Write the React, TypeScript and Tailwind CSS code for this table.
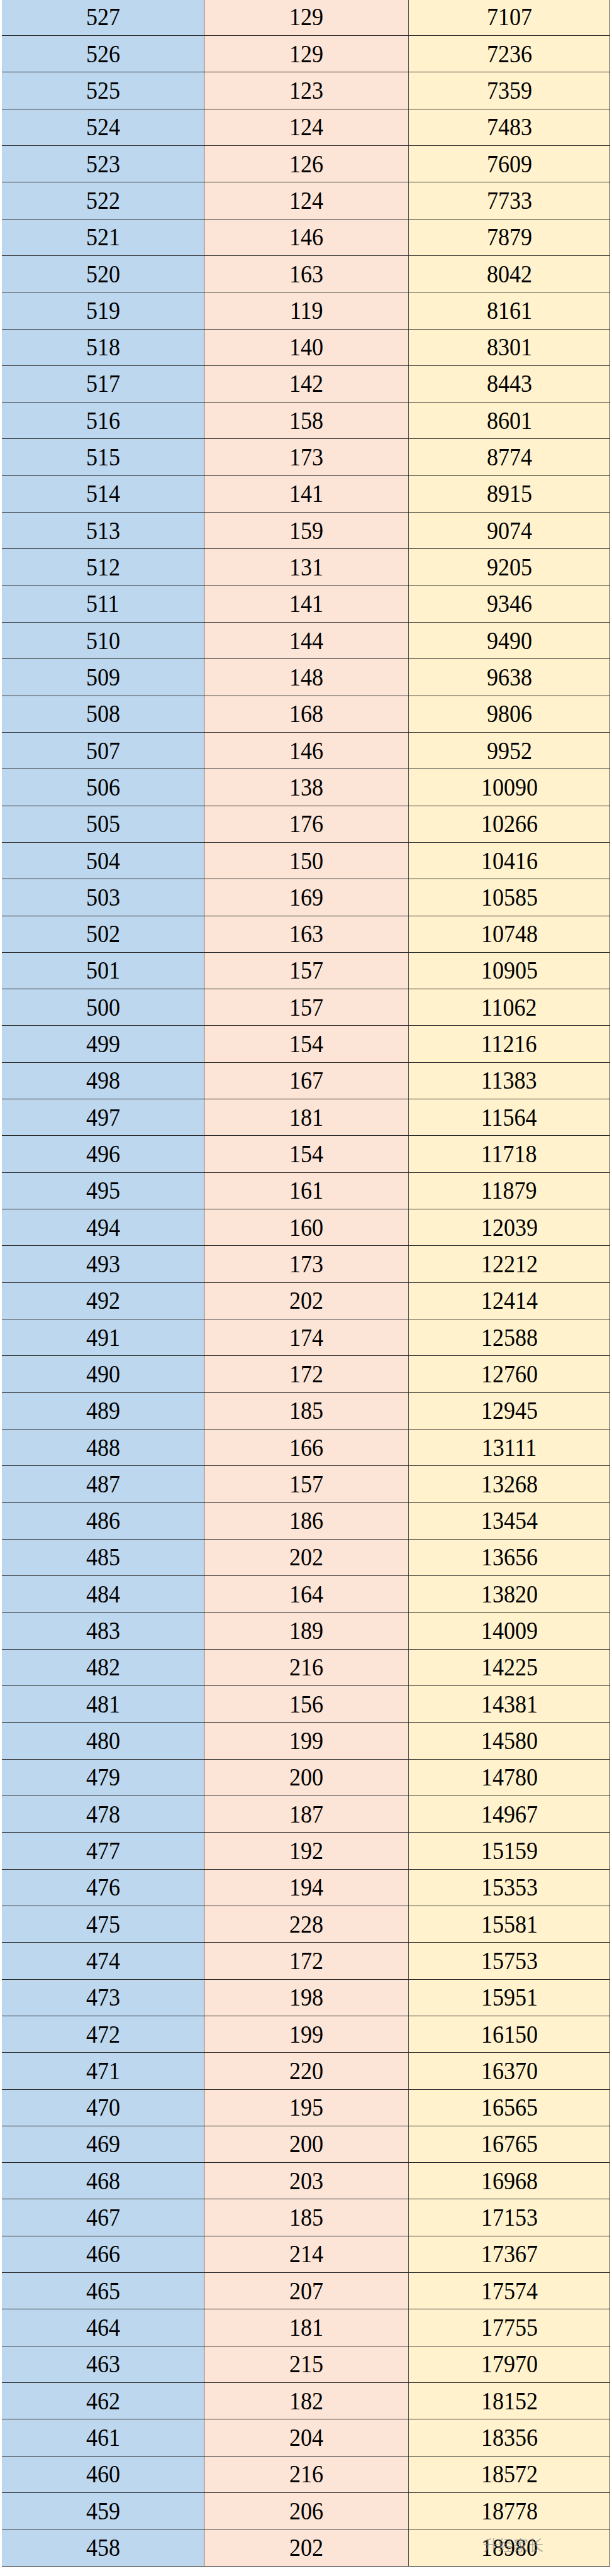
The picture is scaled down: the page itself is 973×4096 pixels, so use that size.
const rows: [number, number, number][] = [
  [527, 129, 7107], [526, 129, 7236], [525, 123, 7359], [524, 124, 7483], [523, 126, 7609],
  [522, 124, 7733], [521, 146, 7879], [520, 163, 8042], [519, 119, 8161], [518, 140, 8301],
  [517, 142, 8443], [516, 158, 8601], [515, 173, 8774], [514, 141, 8915], [513, 159, 9074],
  [512, 131, 9205], [511, 141, 9346], [510, 144, 9490], [509, 148, 9638], [508, 168, 9806],
  [507, 146, 9952], [506, 138, 10090], [505, 176, 10266], [504, 150, 10416], [503, 169, 10585],
  [502, 163, 10748], [501, 157, 10905], [500, 157, 11062], [499, 154, 11216], [498, 167, 11383],
  [497, 181, 11564], [496, 154, 11718], [495, 161, 11879], [494, 160, 12039], [493, 173, 12212],
  [492, 202, 12414], [491, 174, 12588], [490, 172, 12760], [489, 185, 12945], [488, 166, 13111],
  [487, 157, 13268], [486, 186, 13454], [485, 202, 13656], [484, 164, 13820], [483, 189, 14009],
  [482, 216, 14225], [481, 156, 14381], [480, 199, 14580], [479, 200, 14780], [478, 187, 14967],
  [477, 192, 15159], [476, 194, 15353], [475, 228, 15581], [474, 172, 15753], [473, 198, 15951],
  [472, 199, 16150], [471, 220, 16370], [470, 195, 16565], [469, 200, 16765], [468, 203, 16968],
  [467, 185, 17153], [466, 214, 17367], [465, 207, 17574], [464, 181, 17755], [463, 215, 17970],
  [462, 182, 18152], [461, 204, 18356], [460, 216, 18572], [459, 206, 18778], [458, 202, 18980],
];

function Num({ value }: { value: number }) {
  return (
    <span className="inline-block scale-x-[0.9] text-[40px] leading-none text-black [font-family:'Liberation_Serif','Times_New_Roman',serif]">
      {value}
    </span>
  );
}

export default function App() {
  return (
    <div className="h-[4096px] w-[973px] overflow-hidden bg-white">
      <div className="-mt-[1.3px] ml-[3px] w-[967px] border-r border-[#444]">
        {rows.map(([score, count, total], i) => (
          <div
            key={score}
            className="grid h-[58.32px] grid-cols-[322px_325px_1fr] border-b-[1.5px] border-[#2a2a2a]"
          >
            <div className="flex items-center justify-center border-r border-[#555] bg-[#bdd7ee]">
              <Num value={score} />
            </div>
            <div className="flex items-center justify-center border-r border-[#555] bg-[#fce4d6]">
              <Num value={count} />
            </div>
            <div className="relative flex items-center justify-center bg-[#fff2cc]">
              <Num value={total} />
              {i === rows.length - 1 && (
                <span className="absolute left-[118px] top-[12px] text-[24px] leading-none text-[#8a8a8a]/60 [font-family:'Noto_Sans_CJK_SC',sans-serif]">
                  升经家长
                </span>
              )}
            </div>
          </div>
        ))}
      </div>
    </div>
  );
}
